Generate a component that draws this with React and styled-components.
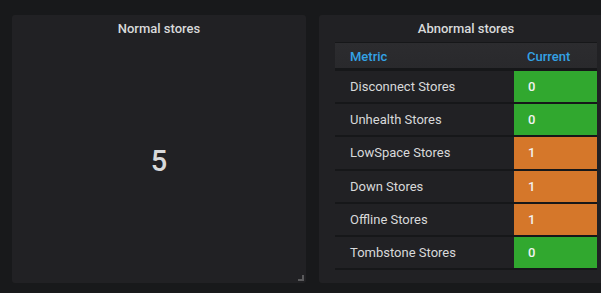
import React from "react";
import styled, { createGlobalStyle } from "styled-components";

const GlobalStyle = createGlobalStyle`
  html, body {
    margin: 0;
    padding: 0;
    background: #18191b;
    overflow: hidden;
  }
  body {
    font-family: Roboto, "Liberation Sans", sans-serif;
    color: #d8d9da;
  }
`;

const Dashboard = styled.div`
  display: flex;
  gap: 13px;
  padding: 15px 0 0 12px;
  width: 601px;
  height: 293px;
  box-sizing: border-box;
`;

const Panel = styled.div`
  position: relative;
  flex: 0 0 294px;
  height: 267.5px;
  background: #212124;
  border-radius: 3px;
  display: flex;
  flex-direction: column;
  padding: 0 ${(p) => (p.$padded ? "16px" : "0")};
  box-sizing: border-box;
`;

const Title = styled.div`
  height: 27.3px;
  line-height: 28px;
  text-align: center;
  font-size: 13px;
  font-weight: 500;
  color: #d8d9da;
  flex-shrink: 0;
`;

const BigValue = styled.div`
  flex: 1;
  display: flex;
  align-items: center;
  justify-content: center;
  font-size: 29px;
  font-weight: 500;
  color: #d8d9da;
  padding-bottom: 3px;
`;

const ResizeHandle = styled.div`
  position: absolute;
  right: 2px;
  bottom: 2px;
  width: 6px;
  height: 6px;
  &::before,
  &::after {
    content: "";
    position: absolute;
    background: #5a5a5c;
  }
  &::before {
    right: 0;
    top: 0;
    width: 2px;
    height: 6px;
  }
  &::after {
    right: 0;
    bottom: 0;
    width: 6px;
    height: 2px;
  }
`;

const Table = styled.div`
  display: grid;
  grid-template-columns: 179px 83px;
  border-top: 1px solid #161719;
`;

const HeadCell = styled.div`
  height: 24.4px;
  padding-top: 3px;
  line-height: 21.4px;
  box-sizing: border-box;
  background: linear-gradient(#2c2c2f, #29292c);
  border-bottom: 3px solid #161719;
  color: #33a2e5;
  font-size: 13px;
  font-weight: 500;
  padding-left: ${(p) => p.$pad}px;
  height: 27.4px;
`;

const Cell = styled.div`
  height: 31.3px;
  line-height: 31.3px;
  border-bottom: 2px solid #161719;
  font-size: 13px;
  padding-left: ${(p) => p.$pad}px;
  background: ${(p) =>
    p.$level === "ok" ? "#31a82f" : p.$level === "warn" ? "#d5772a" : "#212124"};
  color: ${(p) => (p.$level ? "#f2f2f2" : "#d8d9da")};
  font-weight: ${(p) => (p.$level ? 500 : 400)};
`;

const rows = [
  { name: "Disconnect Stores", value: 0 },
  { name: "Unhealth Stores", value: 0 },
  { name: "LowSpace Stores", value: 1 },
  { name: "Down Stores", value: 1 },
  { name: "Offline Stores", value: 1 },
  { name: "Tombstone Stores", value: 0 },
];

export default function App() {
  return (
    <>
      <GlobalStyle />
      <Dashboard>
        <Panel>
          <Title>Normal stores</Title>
          <BigValue>5</BigValue>
          <ResizeHandle />
        </Panel>
        <Panel $padded>
          <Title>Abnormal stores</Title>
          <Table>
            <HeadCell $pad={15}>Metric</HeadCell>
            <HeadCell $pad={13}>Current</HeadCell>
            {rows.map((r) => (
              <React.Fragment key={r.name}>
                <Cell $pad={15}>{r.name}</Cell>
                <Cell $pad={14} $level={r.value > 0 ? "warn" : "ok"}>
                  {r.value}
                </Cell>
              </React.Fragment>
            ))}
          </Table>
        </Panel>
      </Dashboard>
    </>
  );
}
